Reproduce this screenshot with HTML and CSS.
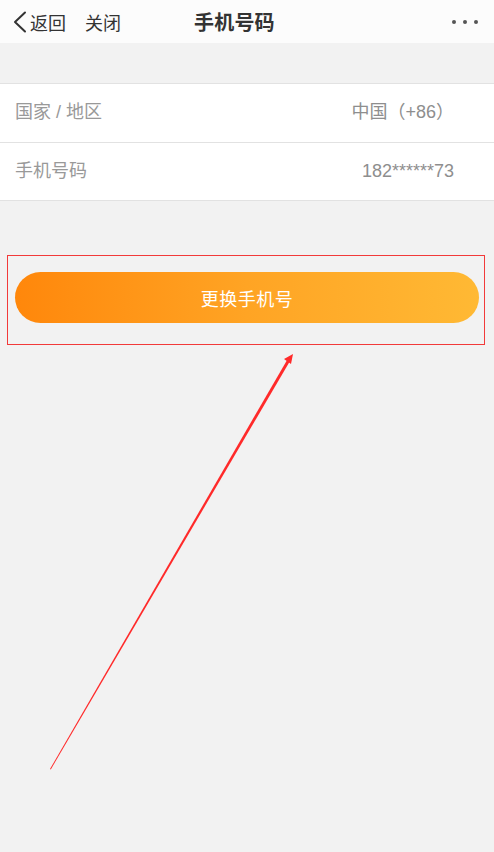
FILE: index.html
```html
<!DOCTYPE html>
<html lang="zh-CN">
<head>
<meta charset="utf-8">
<title>手机号码</title>
<link rel="stylesheet" href="styles.css">
</head>
<body>
<div class="page">
  <header class="navbar">
    <div class="nav-left">
      <span class="back">
        <svg class="chev" width="15" height="22" viewBox="0 0 15 22"><path d="M13 1.5 L3 11 L13 20.5" fill="none" stroke="#333" stroke-width="2" stroke-linecap="round" stroke-linejoin="round"/></svg>
        <span>返回</span>
      </span>
      <span class="close">关闭</span>
    </div>
    <div class="title">手机号码</div>
    <div class="more"><i></i><i></i><i></i></div>
  </header>

  <div class="gap"></div>

  <ul class="list">
    <li class="row"><span class="label">国家 / 地区</span><span class="value">中国（+86）</span></li>
    <li class="row"><span class="label">手机号码</span><span class="value">182******73</span></li>
  </ul>

  <div class="annot">
    <button class="btn">更换手机号</button>
  </div>

  <svg class="arrow" width="494" height="852" viewBox="0 0 494 852">
    <polygon points="50,769 50.8,769.4 290,361 287.4,359.4" fill="#ff2a2a"/>
    <polygon points="293,354 284,359 291,364" fill="#ff2a2a"/>
  </svg>
</div>
</body>
</html>
```

FILE: styles.css
```css
* { box-sizing: border-box; margin: 0; padding: 0; }
html, body { width: 494px; height: 852px; }
body {
  background: #f2f2f2;
  font-family: "Noto Sans CJK SC", "Noto Sans", sans-serif;
  color: #333;
  overflow: hidden;
}
.page { position: relative; width: 494px; height: 852px; }

.navbar {
  height: 43px;
  background: #fcfcfc;
  display: flex;
  align-items: center;
  padding-left: 12px;
  padding-right: 16px;
}
.nav-left { display: flex; align-items: center; font-size: 18px; color: #333; line-height: 1; }
.back { display: flex; align-items: center; }
.chev { display: block; margin-right: 3px; }
.close { margin-left: 19px; }
.title {
  margin-left: 73px;
  font-size: 20px;
  font-weight: bold;
  color: #333;
  letter-spacing: 0.2px;
  line-height: 1;
}
.more { margin-left: auto; display: flex; gap: 7px; }
.more i { width: 4px; height: 4px; border-radius: 50%; background: #555; display: block; }

.gap { height: 40px; }

.list {
  list-style: none;
  background: #fff;
  border-top: 1px solid #e2e2e2;
  border-bottom: 1px solid #e2e2e2;
}
.row {
  height: 58px;
  display: flex;
  align-items: center;
  justify-content: space-between;
  padding-left: 15px;
  padding-right: 40px;
  padding-bottom: 2px;
  font-family: "Liberation Sans", "Noto Sans CJK SC", sans-serif;
  font-size: 18px;
  line-height: 1;
  color: #999;
}
.row + .row { border-top: 1px solid #e2e2e2; }
.value { color: #8e8e8e; }

.annot {
  margin-top: 54px;
  margin-left: 7px;
  width: 478px;
  border: 1px solid #f23a3a;
  padding: 16px 5px 21px 7px;
}
.btn {
  display: block;
  width: 100%;
  height: 51px;
  border: none;
  border-radius: 26px;
  background: linear-gradient(90deg, #ff870b 0%, #ffa424 50%, #ffb934 100%);
  color: #fff;
  font-family: "Noto Sans CJK SC", "Noto Sans", sans-serif;
  font-size: 18px;
  letter-spacing: 0.5px;
}

.arrow { position: absolute; left: 0; top: 0; pointer-events: none; }
```
